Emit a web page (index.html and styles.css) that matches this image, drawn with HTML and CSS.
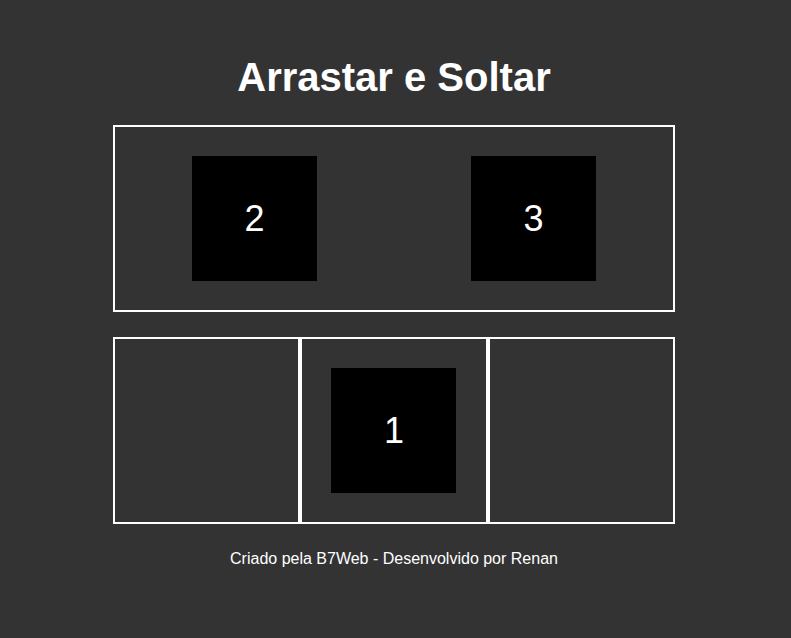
FILE: index.html
```html
<!DOCTYPE html>
<html lang="pt-br">
<head>
<meta charset="utf-8">
<title>Arrastar e Soltar</title>
<link rel="stylesheet" href="styles.css">
</head>
<body>
<main class="page">
  <h1 class="title">Arrastar e Soltar</h1>
  <div class="neutral-area">
    <div class="item">2</div>
    <div class="item">3</div>
  </div>
  <div class="areas">
    <div class="area"></div>
    <div class="area"><div class="item">1</div></div>
    <div class="area"></div>
  </div>
  <footer class="footer">Criado pela B7Web - Desenvolvido por Renan</footer>
</main>
</body>
</html>
```
FILE: styles.css
```css
html, body {
  margin: 0;
  padding: 0;
  background: #333333;
  color: #ffffff;
  font-family: "Liberation Sans", Arial, sans-serif;
}
.page {
  display: flex;
  flex-direction: column;
  align-items: center;
  padding-top: 54px;
  padding-right: 3px;
}
.title {
  margin: 0;
  font-size: 40px;
  line-height: 46px;
  font-weight: bold;
}
.neutral-area {
  box-sizing: border-box;
  margin-top: 25px;
  width: 562px;
  height: 187px;
  border: 2px solid #ffffff;
  display: flex;
  justify-content: space-around;
  align-items: center;
}
.areas {
  margin-top: 25px;
  width: 562px;
  height: 187px;
  display: flex;
}
.area {
  box-sizing: border-box;
  flex: 1;
  border: 2px solid #ffffff;
  display: flex;
  justify-content: center;
  align-items: center;
}
.item {
  width: 125px;
  height: 125px;
  background: #000000;
  color: #ffffff;
  font-size: 36px;
  display: flex;
  justify-content: center;
  align-items: center;
}
.footer {
  margin-top: 26px;
  font-size: 16px;
  line-height: 18px;
}
```
